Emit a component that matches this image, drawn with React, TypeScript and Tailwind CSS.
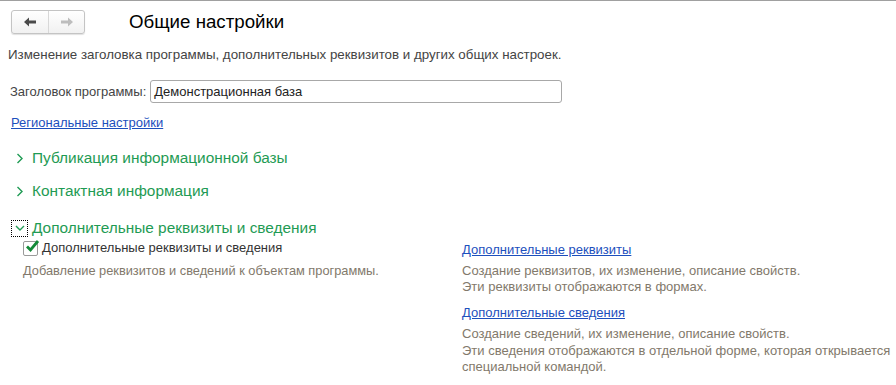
import type { ReactNode } from "react";

const font = { fontFamily: '"Liberation Sans", Arial, sans-serif' };

function ArrowLeft({ color }: { color: string }) {
  return (
    <svg width="12" height="10" viewBox="0 0 12 10">
      <path d="M0 5 L5 0.5 L5 3.5 L12 3.5 L12 6.5 L5 6.5 L5 9.5 Z" fill={color} />
    </svg>
  );
}

function ArrowRight({ color }: { color: string }) {
  return (
    <svg width="12" height="10" viewBox="0 0 12 10">
      <path d="M12 5 L7 0.5 L7 3.5 L0 3.5 L0 6.5 L7 6.5 L7 9.5 Z" fill={color} />
    </svg>
  );
}

function Chevron({ open }: { open?: boolean }) {
  return open ? (
    <svg width="10" height="8" viewBox="0 0 10 8">
      <path d="M1 2 L5 6 L9 2" stroke="#1f9b54" strokeWidth="1.4" fill="none" />
    </svg>
  ) : (
    <svg width="8" height="11" viewBox="0 0 8 11">
      <path d="M1.5 1 L6 5.5 L1.5 10" stroke="#1f9b54" strokeWidth="1.4" fill="none" />
    </svg>
  );
}

function GroupTitle({ children, open, className }: { children: ReactNode; open?: boolean; className: string }) {
  return (
    <div className={`flex h-5 items-center ${className}`}>
      {open ? (
        <div className="ml-[11px] mr-[4px] flex h-[17px] w-[17px] items-center justify-center border border-dotted border-black">
          <Chevron open />
        </div>
      ) : (
        <div className="ml-[16px] mr-[8px] flex w-[8px] items-center">
          <Chevron />
        </div>
      )}
      <span className="text-[15.4px] leading-5 text-[#1f9b54]">{children}</span>
    </div>
  );
}

export default function App() {
  return (
    <div className="h-[385px] w-[896px] overflow-hidden border-t border-[#a0a0a0] bg-white text-[#333]" style={font}>
      <div className="flex items-center pt-[9px]">
        <div className="ml-[11px] flex h-[24px] w-[74px] overflow-hidden rounded-[3px] border border-[#c4c4c4] bg-gradient-to-b from-white to-[#f1f1f1] shadow-[0_1px_1px_rgba(0,0,0,0.12)]">
          <div className="flex w-[37px] items-center justify-center border-r border-[#d8d8d8]">
            <ArrowLeft color="#4a4a4a" />
          </div>
          <div className="flex flex-1 items-center justify-center">
            <ArrowRight color="#bdbdbd" />
          </div>
        </div>
        <h1 className="ml-[44px] text-[18.7px] leading-6 text-black">Общие настройки</h1>
      </div>

      <p className="ml-[8px] mt-[13px] text-[13.33px] leading-4 text-[#444]">
        Изменение заголовка программы, дополнительных реквизитов и других общих настроек.
      </p>

      <div className="mt-[17px] flex items-center">
        <span className="ml-[10px] text-[13px] leading-4 text-[#444]">Заголовок программы:</span>
        <div className="ml-[4px] flex h-[23px] w-[412px] items-center rounded-[3px] border border-[#a8a8a8] px-[3px] text-[13px] text-[#222]">
          Демонстрационная база
        </div>
      </div>

      <a className="ml-[11px] mt-[12px] block w-fit text-[13px] leading-4 text-[#1c4fbd] underline">
        Региональные настройки
      </a>

      <GroupTitle className="mt-[17px]">Публикация информационной базы</GroupTitle>
      <GroupTitle className="mt-[13px]">Контактная информация</GroupTitle>
      <GroupTitle className="mt-[17px]" open>
        Дополнительные реквизиты и сведения
      </GroupTitle>

      <div className="mt-[2px] flex pl-[23px]">
        <div className="w-[439px]">
          <div className="flex h-4 items-center">
            <div className="relative h-[15px] w-[15px] rounded-[2px] border border-[#9a9a9a] bg-white">
              <svg className="absolute -right-[3px] -top-[4px]" width="16" height="16" viewBox="0 0 16 16">
                <path d="M3 8.5 L6.5 12 L14 3" stroke="#138a38" strokeWidth="2.8" fill="none" />
              </svg>
            </div>
            <span className="ml-[4px] text-[13px] leading-4 text-[#333]">Дополнительные реквизиты и сведения</span>
          </div>
          <p className="mt-[7px] text-[12.8px] leading-4 text-[#82796b]">
            Добавление реквизитов и сведений к объектам программы.
          </p>
        </div>
        <div className="pt-[2px]">
          <a className="block w-fit text-[13px] leading-4 text-[#1c4fbd] underline">Дополнительные реквизиты</a>
          <p className="mt-[5px] text-[13px] leading-4 text-[#82796b]">
            Создание реквизитов, их изменение, описание свойств.
            <br />
            Эти реквизиты отображаются в формах.
          </p>
          <a className="mt-[10px] block w-fit text-[13px] leading-4 text-[#1c4fbd] underline">Дополнительные сведения</a>
          <p className="mt-[5px] text-[13px] leading-[16.5px] text-[#82796b]">
            Создание сведений, их изменение, описание свойств.
            <br />
            Эти сведения отображаются в отдельной форме, которая открывается
            <br />
            специальной командой.
          </p>
        </div>
      </div>
    </div>
  );
}
